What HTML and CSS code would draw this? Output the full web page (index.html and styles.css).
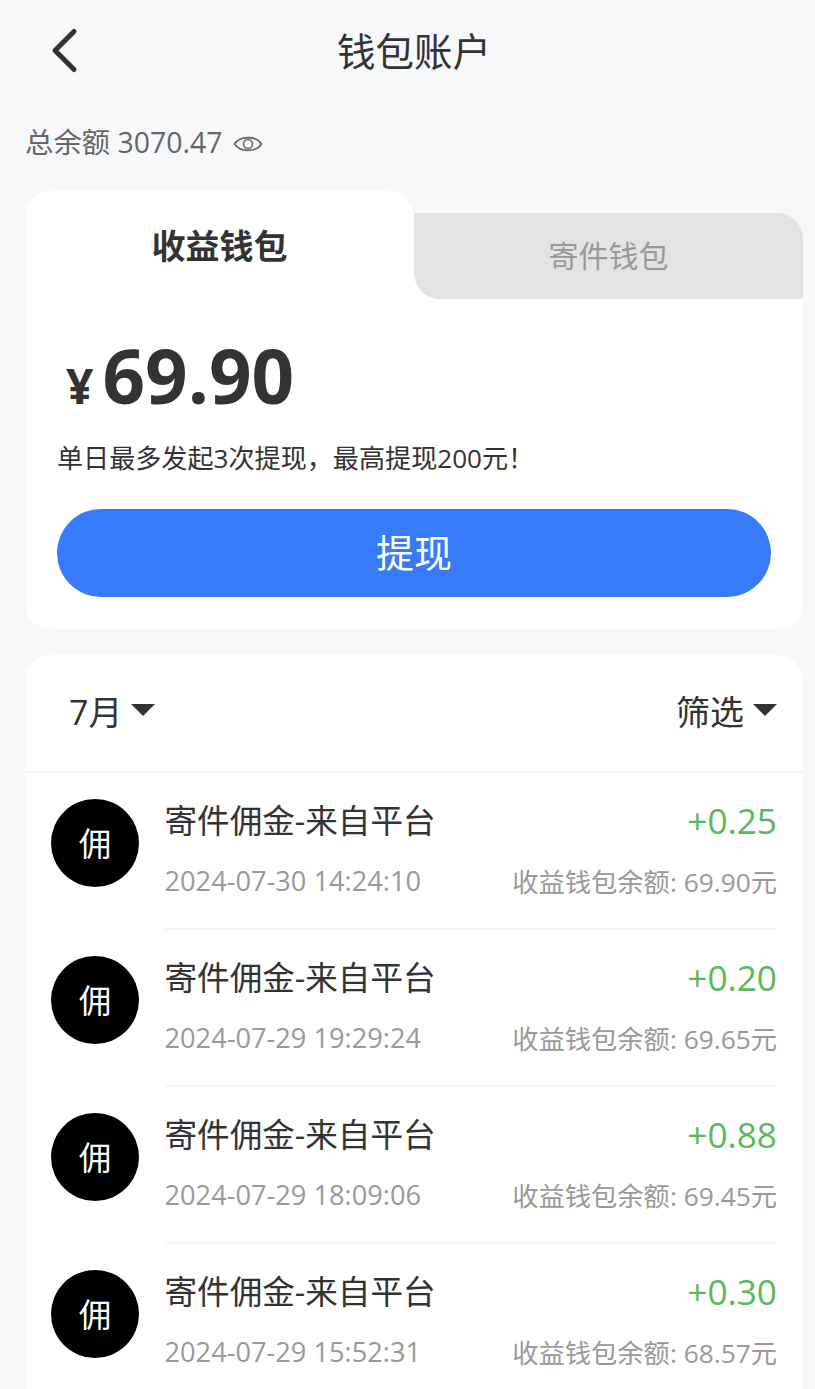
FILE: index.html
```html
<!DOCTYPE html>
<html lang="zh-CN">
<head>
    <meta charset="UTF-8">
    <meta name="viewport" content="width=device-width, initial-scale=1.0">
    <title>钱包账户</title>
    <link rel="stylesheet" href="styles.css">
</head>
<body>
    <header class="top-bar">
        <svg class="back-icon" viewBox="0 0 30 50" width="30" height="50">
            <path d="M25 5.5 L6 24.5 L25 43.5" fill="none" stroke="#333" stroke-width="5" stroke-linecap="round" stroke-linejoin="round"/>
        </svg>
        <h1 class="page-title">钱包账户</h1>
    </header>

    <div class="total-line">
        <span>总余额 3070.47</span>
        <svg class="eye-icon" viewBox="0 0 30 20" width="30" height="20">
            <path d="M1.5 10 C7 1.5 23 1.5 28.5 10 C23 18.5 7 18.5 1.5 10 Z" fill="none" stroke="#666" stroke-width="1.6"/>
            <circle cx="15" cy="10" r="4.5" fill="none" stroke="#666" stroke-width="1.6"/>
        </svg>
    </div>

    <section class="wallet-card">
        <div class="tabs">
            <div class="tab tab-active">收益钱包</div>
            <div class="tab-slot">
                <div class="tab tab-other">寄件钱包</div>
            </div>
        </div>
        <div class="wallet-body">
            <div class="balance"><span class="currency">¥</span><span class="amount">69.90</span></div>
            <p class="wallet-note">单日最多发起3次提现，最高提现200元！</p>
            <button type="button" class="withdraw-btn">提现</button>
        </div>
    </section>

    <section class="records-card">
        <div class="filter-bar">
            <div class="filter-item filter-month">7月<i class="caret"></i></div>
            <div class="filter-item">筛选<i class="caret"></i></div>
        </div>

        <div class="record">
            <div class="avatar">佣</div>
            <div class="record-info">
                <div class="record-line">
                    <span class="record-title">寄件佣金-来自平台</span>
                    <span class="record-amount">+0.25</span>
                </div>
                <div class="record-line record-sub">
                    <span class="record-date">2024-07-30 14:24:10</span>
                    <span class="record-rest">收益钱包余额: 69.90元</span>
                </div>
            </div>
        </div>

        <div class="record">
            <div class="avatar">佣</div>
            <div class="record-info">
                <div class="record-line">
                    <span class="record-title">寄件佣金-来自平台</span>
                    <span class="record-amount">+0.20</span>
                </div>
                <div class="record-line record-sub">
                    <span class="record-date">2024-07-29 19:29:24</span>
                    <span class="record-rest">收益钱包余额: 69.65元</span>
                </div>
            </div>
        </div>

        <div class="record">
            <div class="avatar">佣</div>
            <div class="record-info">
                <div class="record-line">
                    <span class="record-title">寄件佣金-来自平台</span>
                    <span class="record-amount">+0.88</span>
                </div>
                <div class="record-line record-sub">
                    <span class="record-date">2024-07-29 18:09:06</span>
                    <span class="record-rest">收益钱包余额: 69.45元</span>
                </div>
            </div>
        </div>

        <div class="record">
            <div class="avatar">佣</div>
            <div class="record-info">
                <div class="record-line">
                    <span class="record-title">寄件佣金-来自平台</span>
                    <span class="record-amount">+0.30</span>
                </div>
                <div class="record-line record-sub">
                    <span class="record-date">2024-07-29 15:52:31</span>
                    <span class="record-rest">收益钱包余额: 68.57元</span>
                </div>
            </div>
        </div>
    </section>
</body>
</html>
```

FILE: styles.css
```css
html, body {
    height: 1389px;
    overflow: hidden;
}

body {
    margin: 0;
    padding: 0 12px 0 25px;
    background-color: #f7f8fa;
    color: #333;
    font-family: "Open Sans", "Noto Sans CJK SC", sans-serif;
}

/* Cabecalho */
.top-bar {
    height: 100px;
    box-sizing: border-box;
    display: flex;
    align-items: center;
    justify-content: center;
    position: relative;
    padding-top: 2px;
}

.back-icon {
    position: absolute;
    left: 24px;
    top: 26px;
}

.page-title {
    margin: 0;
    font-size: 38.5px;
    font-weight: 400;
    line-height: 50px;
}

.total-line {
    height: 91px;
    display: flex;
    align-items: flex-start;
    gap: 11px;
    padding-top: 22px;
    box-sizing: border-box;
    font-size: 28.4px;
    line-height: 40px;
    color: #666;
}

.eye-icon {
    margin-top: 12px;
}

/* Cartao da carteira */
.wallet-card {
    height: 438px;
    background-color: #fff;
    border-radius: 26px;
}

.tabs {
    display: flex;
    align-items: flex-end;
    height: 108px;
    background-color: #f7f8fa;
}

.tab {
    display: flex;
    align-items: center;
    justify-content: center;
}

.tab-active {
    flex: 1;
    height: 108px;
    padding-bottom: 2px;
    box-sizing: border-box;
    background-color: #fff;
    border-radius: 26px 26px 0 0;
    font-size: 34px;
    font-weight: 700;
}

/* Fundo branco atras do canto inferior esquerdo da aba cinza */
.tab-slot {
    flex: 1;
    height: 86px;
    background: linear-gradient(90deg, #fff 26px, transparent 26px);
}

.tab-other {
    height: 86px;
    padding-bottom: 4px;
    box-sizing: border-box;
    background-color: #e3e3e3;
    border-radius: 0 26px 0 26px;
    font-size: 30px;
    color: #999;
}

.wallet-body {
    padding: 32px 32px 0;
}

.balance {
    display: flex;
    align-items: baseline;
    height: 90px;
    padding-left: 9px;
    line-height: 88px;
    font-weight: 700;
}

.currency {
    font-size: 48px;
    margin-right: 9px;
}

.amount {
    font-size: 74.5px;
}

.wallet-note {
    margin: 18px 0 0;
    font-size: 26.1px;
    line-height: 38px;
}

.withdraw-btn {
    display: block;
    width: 100%;
    height: 88px;
    margin-top: 32px;
    padding: 0 0 5px;
    border: none;
    border-radius: 44px;
    background-color: #377afa;
    color: #fff;
    font-family: inherit;
    font-size: 38px;
}

/* Lista de registros */
.records-card {
    margin-top: 26px;
    height: 760px;
    background-color: #fff;
    border-radius: 26px 26px 0 0;
}

.filter-bar {
    height: 118px;
    box-sizing: border-box;
    padding: 0 26px 6px 44px;
    display: flex;
    align-items: center;
    justify-content: space-between;
    border-bottom: 2px solid #f5f5f5;
    font-size: 34px;
}

.filter-item {
    display: flex;
    align-items: center;
    gap: 9px;
}

.caret {
    width: 0;
    height: 0;
    border-left: 12px solid transparent;
    border-right: 12px solid transparent;
    border-top: 12px solid #333;
}

.record {
    display: flex;
    align-items: flex-start;
    height: 157px;
    box-sizing: border-box;
    padding: 26px 26px 0;
    gap: 25.5px;
}

.avatar {
    flex: none;
    width: 88px;
    height: 88px;
    border-radius: 50%;
    background-color: #000;
    color: #fff;
    font-size: 32.5px;
    line-height: 90px;
    text-align: center;
}

.record-info {
    flex: 1;
    height: 129px;
    border-bottom: 2px solid #f5f5f5;
}

.record-line {
    display: flex;
    justify-content: space-between;
    align-items: center;
    height: 40px;
}

.record-title {
    font-size: 32.6px;
}

.record-amount {
    padding-top: 2px;
    font-size: 35.2px;
    color: #5cb85c;
}

.record-sub {
    margin-top: 21px;
    color: #999;
}

.record-date {
    font-size: 27.2px;
}

.record-rest {
    font-size: 26.3px;
}
```
